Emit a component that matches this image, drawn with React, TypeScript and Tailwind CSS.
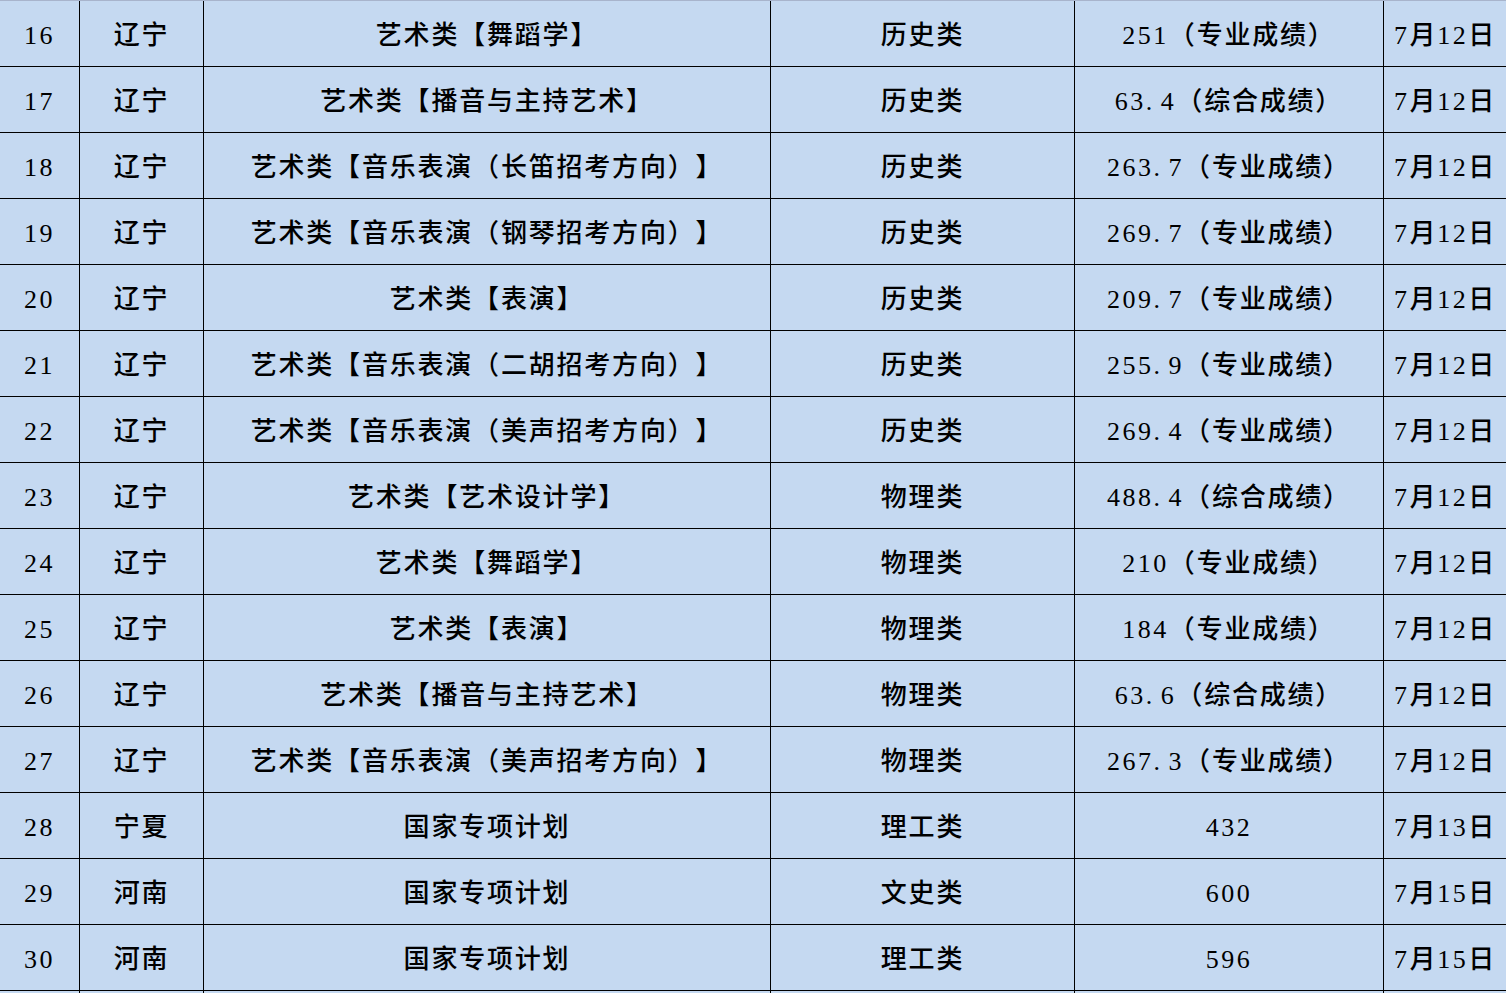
import React from "react";

const rows: [string, string, string, string, string, string][] = [
  ["16", "辽宁", "艺术类【舞蹈学】", "历史类", "251（专业成绩）", "7月12日"],
  ["17", "辽宁", "艺术类【播音与主持艺术】", "历史类", "63.4（综合成绩）", "7月12日"],
  ["18", "辽宁", "艺术类【音乐表演（长笛招考方向）】", "历史类", "263.7（专业成绩）", "7月12日"],
  ["19", "辽宁", "艺术类【音乐表演（钢琴招考方向）】", "历史类", "269.7（专业成绩）", "7月12日"],
  ["20", "辽宁", "艺术类【表演】", "历史类", "209.7（专业成绩）", "7月12日"],
  ["21", "辽宁", "艺术类【音乐表演（二胡招考方向）】", "历史类", "255.9（专业成绩）", "7月12日"],
  ["22", "辽宁", "艺术类【音乐表演（美声招考方向）】", "历史类", "269.4（专业成绩）", "7月12日"],
  ["23", "辽宁", "艺术类【艺术设计学】", "物理类", "488.4（综合成绩）", "7月12日"],
  ["24", "辽宁", "艺术类【舞蹈学】", "物理类", "210（专业成绩）", "7月12日"],
  ["25", "辽宁", "艺术类【表演】", "物理类", "184（专业成绩）", "7月12日"],
  ["26", "辽宁", "艺术类【播音与主持艺术】", "物理类", "63.6（综合成绩）", "7月12日"],
  ["27", "辽宁", "艺术类【音乐表演（美声招考方向）】", "物理类", "267.3（专业成绩）", "7月12日"],
  ["28", "宁夏", "国家专项计划", "理工类", "432", "7月13日"],
  ["29", "河南", "国家专项计划", "文史类", "600", "7月15日"],
  ["30", "河南", "国家专项计划", "理工类", "596", "7月15日"],
  ["", "", "", "", "", ""],
];

function Cell({ text }: { text: string }) {
  const parts = text.match(/[0-9.]+|[^0-9.]+/g) || [];
  return (
    <>
      {parts.map((p, i) =>
        /^[0-9.]+$/.test(p) ? (
          <span key={i} className="tracking-[2.5px]">
            {p.split(/(\.)/).map((q, k) =>
              q === "." ? (
                <span key={k} className="inline-block w-[15px] text-left tracking-normal">
                  .
                </span>
              ) : (
                <span key={k}>{q}</span>
              )
            )}
          </span>
        ) : (
          <span key={i} className="tracking-[1.8px]">
            {p}
          </span>
        )
      )}
    </>
  );
}

export default function App() {
  return (
    <div
      className="w-[1506px] h-[993px] overflow-hidden bg-[#c5d9f1] text-black [text-spacing-trim:space-all]"
      style={{ fontFamily: '"Liberation Serif", "Noto Sans CJK SC", serif' }}
    >
      <div className="h-px bg-[#a8b4cc]" />
      {rows.map((r, i) => (
        <div
          key={i}
          className="grid grid-cols-[80px_124px_567px_304px_309px_122px] h-[66px] border-b border-black"
        >
          {r.map((c, j) => (
            <div
              key={j}
              className={`flex items-center justify-center text-[26px] font-medium leading-none pt-[5px] whitespace-nowrap ${
                j < 5 ? "border-r border-black" : ""
              }`}
            >
              <Cell text={c} />
            </div>
          ))}
        </div>
      ))}
    </div>
  );
}
